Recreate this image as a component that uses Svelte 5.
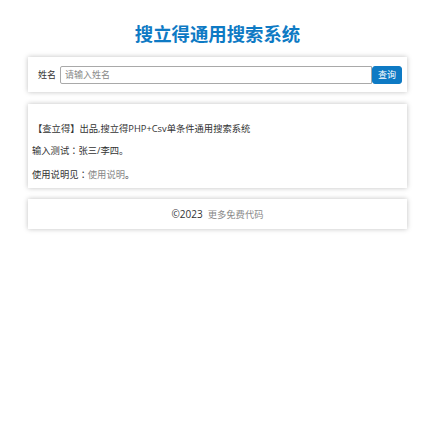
<script lang="ts">
  let keyword = $state("");
</script>

<div class="page">
  <h1 class="title">搜立得通用搜索系统</h1>

  <form class="card search" onsubmit={(e) => e.preventDefault()}>
    <label class="search-label" for="name-input">姓名</label>
    <input id="name-input" class="search-input" bind:value={keyword} placeholder="请输入姓名" />
    <button class="search-btn" type="submit">查询</button>
  </form>

  <div class="card info">
    <p class="first">【查立得】出品,搜立得PHP+Csv单条件通用搜索系统</p>
    <p>输入测试<span class="colon">：</span>张三/李四。</p>
    <p>使用说明见<span class="colon">：</span><span class="link">使用说明</span>。</p>
  </div>

  <div class="card footer">
    <span class="copy">©2023</span>
    <span class="link">更多免费代码</span>
  </div>
</div>

<style>
  :global(body) {
    background: #fff;
    font-family: "Open Sans", "Noto Sans CJK SC", sans-serif;
    color: #333;
  }
  .page {
    padding: 0 23px 20px 28px;
    display: flex;
    flex-direction: column;
  }
  .title {
    margin: 22px 0 11px;
    height: 24px;
    line-height: 24px;
    text-align: center;
    font-size: 18.4px;
    font-weight: 700;
    color: #0e7ac4;
  }
  .card {
    background: #fff;
    box-shadow: 0 0 5px rgba(0, 0, 0, 0.25);
  }
  .search {
    display: flex;
    align-items: center;
    height: 35px;
    padding: 0 5px 0 10px;
    margin-bottom: 12px;
  }
  .search-label {
    font-size: 9px;
    width: 22px;
    flex: none;
  }
  .search-input {
    flex: 1;
    min-width: 0;
    height: 18px;
    box-sizing: border-box;
    padding: 0 4px;
    border: 1px solid #a9a9a9;
    border-radius: 2px 0 0 2px;
    font-family: inherit;
    font-size: 9px;
    outline: none;
  }
  .search-input::placeholder {
    color: #888;
  }
  .search-btn {
    width: 30px;
    height: 18px;
    padding: 0;
    border: 1px solid #0e7ac4;
    border-radius: 3px;
    background: #0e7ac4;
    color: #fff;
    font-family: inherit;
    font-size: 9px;
  }
  .info {
    height: 84px;
    box-sizing: border-box;
    padding: 19px 4px 0;
    margin-bottom: 11px;
    font-size: 9.3px;
  }
  .info p {
    margin: 0 0 11px;
    line-height: 12px;
  }
  .info .first {
    margin-bottom: 9px;
    padding-left: 1px;
  }
  .colon {
    font-family: "Noto Sans CJK TC", sans-serif;
  }
  .link {
    color: #888;
  }
  .footer {
    height: 30px;
    display: flex;
    align-items: center;
    justify-content: center;
    gap: 5px;
    font-size: 9.3px;
  }
  .copy {
    font-size: 10px;
  }
</style>
